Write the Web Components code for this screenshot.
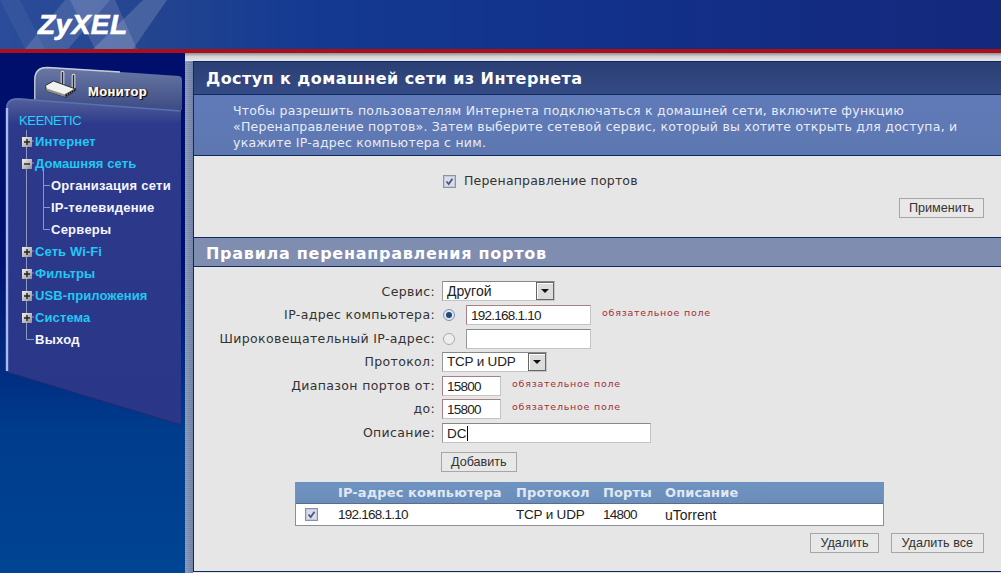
<!DOCTYPE html>
<html lang="ru"><head><meta charset="utf-8"><title>ZyXEL Keenetic</title>
<style>
html,body{margin:0;padding:0;width:1001px;height:573px;overflow:hidden;background:#00106b}
</style></head>
<body>
<zy-app>
  <zy-header slot="header"></zy-header>
  <zy-sidebar slot="side">
    <zy-item kind="plus">Интернет</zy-item>
    <zy-item kind="minus">Домашняя сеть</zy-item>
    <zy-item kind="sub">Организация сети</zy-item>
    <zy-item kind="sub">IP-телевидение</zy-item>
    <zy-item kind="sub">Серверы</zy-item>
    <zy-item kind="plus">Сеть Wi-Fi</zy-item>
    <zy-item kind="plus">Фильтры</zy-item>
    <zy-item kind="plus">USB-приложения</zy-item>
    <zy-item kind="plus">Система</zy-item>
    <zy-item kind="leaf">Выход</zy-item>
  </zy-sidebar>
  <zy-main slot="main">
    <zy-title variant="dark">Доступ к домашней сети из Интернета</zy-title>
    <zy-desc>Чтобы разрешить пользователям Интернета подключаться к домашней сети, включите функцию<br>«Перенаправление портов». Затем выберите сетевой сервис, который вы хотите открыть для доступа, и<br>укажите IP-адрес компьютера с ним.</zy-desc>
    <zy-toggle-section>Перенаправление портов</zy-toggle-section>
    <zy-title variant="light">Правила перенаправления портов</zy-title>
    <zy-rules>
      <zy-row label="Сервис:"><zy-select w="113">Другой</zy-select></zy-row>
      <zy-row label="IP-адрес компьютера:"><zy-radio on></zy-radio><zy-input w="125" req num value="192.168.1.10"></zy-input><zy-note>обязательное поле</zy-note></zy-row>
      <zy-row label="Широковещательный IP-адрес:"><zy-radio></zy-radio><zy-input w="125"></zy-input></zy-row>
      <zy-row label="Протокол:"><zy-select w="105" tight>TCP и UDP</zy-select></zy-row>
      <zy-row label="Диапазон портов от:"><zy-input w="59" req num value="15800"></zy-input><zy-note>обязательное поле</zy-note></zy-row>
      <zy-row label="до:"><zy-input w="59" req num value="15800"></zy-input><zy-note>обязательное поле</zy-note></zy-row>
      <zy-row label="Описание:"><zy-input w="209" focus value="DC"></zy-input></zy-row>
      <zy-row label="" class="add"><zy-btn style="margin-left:-1px">Добавить</zy-btn></zy-row>
      <zy-table></zy-table>
      <zy-actions><zy-btn>Удалить</zy-btn><zy-btn style="padding:0 10px">Удалить все</zy-btn></zy-actions>
    </zy-rules>
  </zy-main>
</zy-app>
<script>
const UI='"DejaVu Sans",Verdana,sans-serif', AR='"Liberation Sans",Arial,sans-serif';
function def(name,html,extra){
  customElements.define(name,class extends HTMLElement{
    constructor(){super();this.attachShadow({mode:'open'});}
    connectedCallback(){
      if(this.shadowRoot.childNodes.length)return;
      this.shadowRoot.innerHTML=typeof html==='function'?html(this):html;
      if(extra)extra(this);
    }
  });
}
const checkSvg=`<svg width="13" height="13" viewBox="0 0 13 13" style="display:block"><rect x=".5" y=".5" width="12" height="12" fill="#dfe3ee" stroke="#8a93a6"/><rect x="1.5" y="1.5" width="10" height="10" fill="#d8dcec" stroke="#c3c9d8"/><path d="M3.5 6.5l2.200 2.600 3.800-5.400" fill="none" stroke="#4a5678" stroke-width="1.700"/></svg>`;

def('zy-app',`<style>
:host{display:grid;width:1001px;height:573px;grid-template-columns:185px 8px 1fr;grid-template-rows:53px 1fr;overflow:hidden;position:relative;font-family:${UI};
 background:linear-gradient(180deg,#000f6b 0,#00106e 45%,#003c8c 75%,#004494 100%)}
.strip{background:repeating-linear-gradient(180deg,rgba(255,255,255,.07) 0 1px,rgba(0,0,0,.05) 1px 2px),linear-gradient(90deg,#8b9ab8,#6c80a8)}
.main{min-width:0;display:flex;flex-direction:column;background:#e8e8e8}
.fade{position:absolute;left:185px;right:0;top:53px;height:8px;background:linear-gradient(180deg,#909196,#d4d5d8 45%,#e6e6e8)}
</style>
<slot name="header"></slot><slot name="side"></slot><div class="strip"></div><div class="main"><slot name="main"></slot></div><div class="fade"></div>`);

def('zy-header',`<style>
:host{display:block;grid-column:1/-1;height:53px;box-sizing:border-box;position:relative;overflow:hidden;border-bottom:4px solid #ab1018;background:linear-gradient(90deg,#2b4c9a 0,#24458f 14%,#143a92 30%,#12318a 60%,#14287c 100%)}
svg{position:absolute;inset:0}
.logo{position:relative;display:block;padding:10px 0 0 38px;font:italic bold 28px/30px "Liberation Sans",Arial,sans-serif;color:#fff;letter-spacing:.5px;-webkit-text-stroke:.7px #fff}
</style>
<svg width="260" height="49" viewBox="0 0 260 49"><g fill="#fff">
<path d="M0 0h20l25 49H25z" opacity=".05"/>
<path d="M65 0h45L68 49H25z" opacity=".13"/>
<path d="M70 0h45l22 49H95z" opacity=".13"/>
<path d="M143 0h24l-34 49H93z" opacity=".16"/></g></svg>
<span class="logo">ZyXEL</span>`);

def('zy-sidebar',`<style>
:host{display:block;position:relative;height:520px;overflow:hidden}
svg{position:absolute;left:0;top:0}
.tab{position:relative;height:45px;padding:16px 0 0 88px;box-sizing:content-box;display:flex;align-items:center;font:bold 13px/16px ${AR};color:#fff;text-shadow:1px 1px 1px #000,1px 0 1px #000;letter-spacing:.35px;-webkit-text-stroke:.2px #fff}
.brand{position:relative;padding:3px 0 0 19px;height:18px;margin-top:-4px;font:13px/16px ${AR};color:#22d4f6;letter-spacing:-.35px}
.list{position:relative;display:flex;flex-direction:column}
</style>
<svg width="185" height="520" viewBox="0 53 185 520">
<defs><linearGradient id="t" x1="0" y1="0" x2="0" y2="1"><stop offset="0" stop-color="#6a79a4"/><stop offset="1" stop-color="#3c4c84"/></linearGradient>
<linearGradient id="b" x1="0" y1="0" x2="0" y2="1"><stop offset="0" stop-color="#54619a"/><stop offset=".08" stop-color="#2d3a8c"/><stop offset="1" stop-color="#2a3788"/></linearGradient></defs>
<path d="M34 110V80q0-13 13-13l132 9q3 .500 3 4v30z" fill="url(#t)"/>
<path d="M34.800 100V80q0-12.500 12.500-12.500L120 72" fill="none" stroke="#c6cde0" stroke-width="1.300"/>
<path d="M6 368V108q0-10 12-10L181 111V425L10 373q-4-1-4-5z" fill="url(#b)"/>
<path d="M7 108q0-9 11-9L181 111" fill="none" stroke="#5a70b0" stroke-width="1.400"/>
<path d="M7 108V371" stroke="#a9bcf0" stroke-width="2.400" fill="none"/>
<path d="M10 373L181 425" stroke="#1e2a70" stroke-width="1" fill="none"/>
<path d="M26.500 130V339.500H34M26.500 141H34M26.500 163H34M26.500 251H34M26.500 273H34M26.500 295H34M26.500 317H34" stroke="#8d96bd" fill="none"/>
<path d="M43.500 170V229.500H50M43.500 185.500H50M43.500 207.500H50" stroke="#8d96bd" fill="none"/>
<path d="M62.500 72.500V84M73.500 75.500V88" stroke="#e8e8ee" stroke-width="3.600" stroke-linecap="round"/>
<path d="M62.500 72.500V84M73.500 75.500V88" stroke="#23262f" stroke-width="1.600" stroke-linecap="round"/>
<path d="M45.500 85.500L53.500 81 75.500 89 65.500 97 46.500 91z" fill="#f2f2f0" stroke="#20222a" stroke-width=".9"/>
<path d="M46.500 88.500L65 94.500 65.500 97 46.500 91z" fill="#8f8f8a"/>
<path d="M65 94.500L75.500 88.500 75.500 90.500 65.500 97.500z" fill="#6e6e6a" stroke="#111" stroke-width=".5"/>
<path d="M66.500 96V94.500M68.500 94.800V93.300M70.500 93.600V92.100M72.500 92.300V90.800M74.500 91V89.500" stroke="#111" stroke-width="1.200"/>
</svg>
<div class="tab">Монитор</div>
<div class="brand">KEENETIC</div>
<div class="list"><slot></slot></div>`);

def('zy-item',h=>{const k=h.getAttribute('kind');
 const box=(k==='plus'||k==='minus')?`<svg class="b" width="10" height="10" viewBox="0 0 10 10"><defs><linearGradient id="g" x1="0" y1="0" x2="1" y2="1"><stop offset="0" stop-color="#f2f2f2"/><stop offset="1" stop-color="#8f8f8f"/></linearGradient></defs><rect width="10" height="10" fill="url(#g)"/><path d="${k==='plus'?'M2 5h6M5 2v6':'M2 5h6'}" stroke="#222" stroke-width="1.400"/></svg>`:'';
 const white=k==='sub'||k==='leaf';
 return `<style>
:host{display:flex;align-items:center;height:22px;padding-left:${k==='sub'?51:22}px;font:bold 13px/22px ${AR};letter-spacing:${white?.25:.1}px;color:${white?'#f4f6ff':'#22c8f2'};white-space:nowrap}
.b{margin-right:3px;flex:none}
.s{display:inline-block;width:${k==='leaf'?13:0}px}
</style>${box}<span class="s"></span><slot></slot>`});

def('zy-main',`<style>:host{display:flex;flex-direction:column;height:511px;background:#e6e6e6;border-left:1px solid #0f2a5e;border-top:1px solid #0f2a5e;border-bottom:1px solid #0f2a5e;margin-top:8px;box-sizing:border-box;color:#333}</style><slot></slot>`);

def('zy-title',h=>{const d=h.getAttribute('variant')==='dark';return `<style>
:host{display:block;box-sizing:border-box;height:${d?33:30}px;padding:${d?8:7}px 0 0 12px;font:bold 16px/18px ${UI};color:#fff;letter-spacing:${d?.43:.72}px;
 background:${d?'linear-gradient(180deg,#2a3f74,#354b85)':'#7f8db0'};border-bottom:1px solid #0f2a5e;${d?'':'border-top:1px solid #0f2a5e;'}white-space:nowrap}
</style><slot></slot>`});

def('zy-desc',`<style>
:host{display:block;box-sizing:border-box;height:61px;padding:8px 0 0 39px;font:12.500px/16px ${UI};color:#e8ecf6;letter-spacing:.24px;background:linear-gradient(180deg,#5f7ab8,#5d78b0);border-bottom:1px solid #0f2a5e;white-space:nowrap}
</style><slot></slot>`);

def('zy-toggle-section',`<style>
:host{display:flex;flex-direction:column;height:81px;box-sizing:border-box;padding:17px 17px 0 0}
.r{display:flex;align-items:center;gap:8px;margin-left:249px;font:12.500px/16px ${UI};letter-spacing:.2px;color:#333;white-space:nowrap}
zy-btn{align-self:flex-end;margin-top:9px}
</style><div class="r">${checkSvg}<slot></slot></div><zy-btn>Применить</zy-btn>`);

def('zy-rules',`<style>:host{display:block;padding:13px 0 0;flex:1}::slotted(.add){margin-top:6px}</style><slot></slot>`);

def('zy-row',h=>`<style>
:host{display:grid;grid-template-columns:241px 1fr;column-gap:7px;height:23.500px;align-items:center}
.l{text-align:right;font:12.500px/16px ${UI};letter-spacing:.36px;color:#333;white-space:nowrap}
.c{display:flex;align-items:center;min-width:0}
</style><div class="l">${h.getAttribute('label')||''}</div><div class="c"><slot></slot></div>`);

def('zy-note',`<style>:host{display:block;margin-left:11px;margin-top:-4px;font:9.500px/12px ${UI};letter-spacing:.75px;color:#a03038;white-space:nowrap}</style><slot></slot>`);

def('zy-input',h=>{const w=h.getAttribute('w'),r=h.hasAttribute('req'),f=h.hasAttribute('focus'),n=h.hasAttribute('num');
 return `<style>
:host{display:block;box-sizing:border-box;width:${w}px;height:20px;background:#fff;border:1px solid #c4c4c4;border-top-color:${r?'#a58085':'#888'};border-left-color:${r?'#a58085':'#999'};padding-left:4px;font:13.500px/20px ${AR};letter-spacing:${n?-.75:0}px;color:#222;white-space:nowrap;overflow:hidden}
i{display:inline-block;width:1px;height:15px;background:#000;vertical-align:-3px}
</style>${h.getAttribute('value')||''}${f?'<i></i>':''}`});

def('zy-radio',h=>`<style>:host{display:block;width:24px;height:14px}svg{display:block}</style>
<svg width="14" height="14" viewBox="0 0 14 14"><circle cx="7" cy="7" r="5.500" fill="${h.hasAttribute('on')?'#dfe6f2':'#eee'}" stroke="${h.hasAttribute('on')?'#7c93b8':'#aaa'}"/>${h.hasAttribute('on')?'<circle cx="7" cy="7" r="3" fill="#1f4a78"/>':''}</svg>`);

def('zy-select',h=>`<style>
:host{display:flex;box-sizing:border-box;width:${h.getAttribute('w')}px;height:20px;margin-top:-1px;background:#fff;border:1px solid #c4c4c4;border-top-color:#888;border-left-color:#999;align-items:stretch;font:${h.hasAttribute('tight')?'13.500px':'14px'}/18px ${AR};letter-spacing:${h.hasAttribute('tight')?-.2:0}px;color:#222;justify-content:space-between}
span{padding-left:4px}
b{display:flex;align-items:center;justify-content:center;width:16px;background:#dcdcdc;border:1px solid #666;box-shadow:inset 1px 1px 0 #fff}
b::after{content:"";border:4px solid transparent;border-top:4px solid #111;border-bottom:0}
</style><span><slot></slot></span><b></b>`);

def('zy-btn',`<style>
:host{display:inline-block;box-sizing:border-box;height:20px;padding:0 9px;background:#e8e8e8;border:1px solid #a6a6a6;font:12.600px/18px ${AR};color:#333;white-space:nowrap}
</style><slot></slot>`);

def('zy-table',`<style>
:host{display:block;box-sizing:border-box;margin:8px 0 0 101px;width:589px;border:1px solid #8a8f98;border-top:0;background:#fff;font-family:${AR}}
.g{display:grid;grid-template-columns:42px 178px 87px 62px 1fr;align-items:center;white-space:nowrap}
.h{height:22px;background:linear-gradient(180deg,#6f93c0,#6b8dba);font:bold 13px/16px ${UI};letter-spacing:.1px;color:#dfe8f4;border-bottom:1px solid #55708f;box-sizing:border-box}
.r{height:21px;font:14px/18px ${AR};color:#222}
.n{font-size:13.500px;letter-spacing:-.75px}
.t{font-size:13.500px;letter-spacing:-.2px}
.r svg{margin-left:9px}
</style>
<div class="g h"><span></span><span>IP-адрес компьютера</span><span>Протокол</span><span>Порты</span><span>Описание</span></div>
<div class="g r"><span>${checkSvg}</span><span class="n">192.168.1.10</span><span class="t">TCP и UDP</span><span class="n">14800</span><span>uTorrent</span></div>`);

def('zy-actions',`<style>:host{display:flex;justify-content:flex-end;gap:12px;padding:7px 17px 0 0}</style><slot></slot>`);
</script>
</body></html>
